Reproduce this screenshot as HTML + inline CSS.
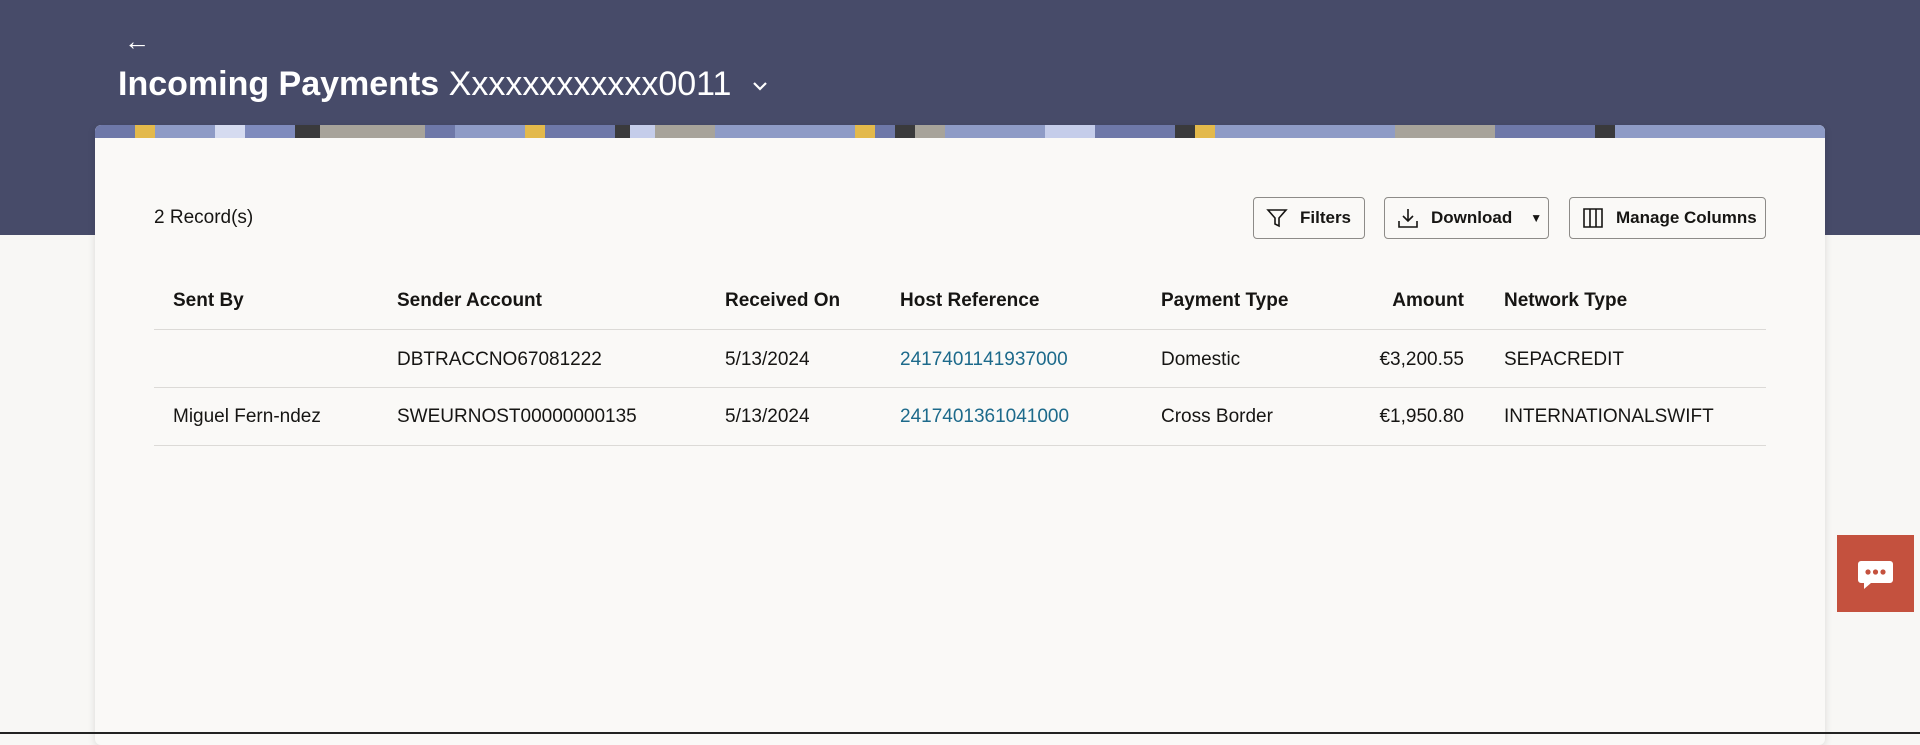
<!DOCTYPE html>
<html><head><style>
*{margin:0;padding:0;box-sizing:border-box}
body{width:1920px;height:734px;overflow:hidden;background:#f8f7f5;font-family:"Liberation Sans",sans-serif;color:#161513;position:relative}
.hdr{position:absolute;left:0;top:0;width:1920px;height:235px;background:#474b69}
.back{position:absolute;left:124px;top:26px;color:#fff;font-size:26px}
.title{position:absolute;left:118px;top:65px;color:#fff;font-size:34px;white-space:nowrap;letter-spacing:0px}
.title b{font-weight:700}
.card{position:absolute;left:95px;top:125px;width:1730px;height:620px;background:#faf9f7;border-radius:6px;overflow:hidden;box-shadow:0 2px 8px rgba(0,0,0,.12)}
.stripe{height:13px;background:linear-gradient(90deg,#6e78a8 0 40px,#e3b94b 40px 60px,#8e9bc6 60px 120px,#d5dbf0 120px 150px,#7f8bbd 150px 200px,#3a3a3c 200px 225px,#a7a39a 225px 330px,#6e78a8 330px 360px,#8e9bc6 360px 430px,#e3b94b 430px 450px,#6e78a8 450px 520px,#3a3a3c 520px 535px,#c5cdea 535px 560px,#a7a39a 560px 620px,#8e9bc6 620px 760px,#e3b94b 760px 780px,#6e78a8 780px 800px,#3a3a3c 800px 820px,#a7a39a 820px 850px,#8e9bc6 850px 950px,#c5cdea 950px 1000px,#6e78a8 1000px 1080px,#3a3a3c 1080px 1100px,#e3b94b 1100px 1120px,#8e9bc6 1120px 1300px,#a7a39a 1300px 1400px,#6e78a8 1400px 1500px,#3a3a3c 1500px 1520px,#8e9bc6 1520px 1730px)}
.rec{position:absolute;left:154px;top:207px;font-size:19px}
.btn{position:absolute;top:197px;height:42px;border:1px solid #8d8b88;border-radius:4px;font-size:17px;font-weight:700;display:flex;align-items:center;background:#faf9f7;white-space:nowrap}
.th,.td{position:absolute;font-size:19px;white-space:nowrap}
.th{font-weight:700;top:290px}
.line{position:absolute;left:154px;width:1612px;height:1px;background:#dcdad7}
.lnk{color:#1d6a8b}
.chat{position:absolute;left:1837px;top:535px;width:77px;height:77px;background:#c4513e}
</style></head><body>
<div class="hdr"></div>
<div class="back">&#8592;</div>
<div class="title"><b>Incoming Payments</b> Xxxxxxxxxxxx0011 <svg width="18" height="12" viewBox="0 0 18 12" style="margin-left:10px;vertical-align:middle"><path d="M3 3l6 6 6-6" stroke="#fff" stroke-width="2.2" fill="none"/></svg></div>
<div class="card"><div class="stripe"></div></div>
<div class="rec">2 Record(s)</div>
<div class="btn" style="left:1253px;width:112px;padding-left:12px"><svg width="22" height="22" viewBox="0 0 22 22" fill="none" stroke="#161513" stroke-width="1.6"><path d="M2 3h18l-7 8v8l-4-2v-6z"/></svg><span style="margin-left:12px">Filters</span></div>
<div class="btn" style="left:1384px;width:165px;padding-left:12px"><svg width="22" height="22" viewBox="0 0 22 22" fill="none" stroke="#161513" stroke-width="1.6"><path d="M11 2v12M6 9l5 5 5-5M2 14v6h18v-6"/></svg><span style="margin-left:12px">Download</span><span style="margin-left:18px;font-size:12px">&#9660;</span></div>
<div class="btn" style="left:1569px;width:197px;padding-left:12px"><svg width="22" height="22" viewBox="0 0 22 22" fill="none" stroke="#161513" stroke-width="1.6"><path d="M2 2h18v18H2zM8 2v18M14 2v18"/></svg><span style="margin-left:12px">Manage Columns</span></div>

<div class="th" style="left:173px">Sent By</div>
<div class="th" style="left:397px">Sender Account</div>
<div class="th" style="left:725px">Received On</div>
<div class="th" style="left:900px">Host Reference</div>
<div class="th" style="left:1161px">Payment Type</div>
<div class="th" style="right:456px">Amount</div>
<div class="th" style="left:1504px">Network Type</div>
<div class="line" style="top:329px"></div>

<div class="td" style="left:397px;top:349px">DBTRACCNO67081222</div>
<div class="td" style="left:725px;top:349px">5/13/2024</div>
<div class="td lnk" style="left:900px;top:349px">2417401141937000</div>
<div class="td" style="left:1161px;top:349px">Domestic</div>
<div class="td" style="right:456px;top:349px">€3,200.55</div>
<div class="td" style="left:1504px;top:349px">SEPACREDIT</div>
<div class="line" style="top:387px"></div>

<div class="td" style="left:173px;top:406px">Miguel Fern-ndez</div>
<div class="td" style="left:397px;top:406px">SWEURNOST00000000135</div>
<div class="td" style="left:725px;top:406px">5/13/2024</div>
<div class="td lnk" style="left:900px;top:406px">2417401361041000</div>
<div class="td" style="left:1161px;top:406px">Cross Border</div>
<div class="td" style="right:456px;top:406px">€1,950.80</div>
<div class="td" style="left:1504px;top:406px">INTERNATIONALSWIFT</div>
<div class="line" style="top:445px"></div>

<div class="chat"><svg width="77" height="77" viewBox="0 0 77 77"><path d="M24 26h29a3 3 0 0 1 3 3v16a3 3 0 0 1-3 3H34l-7 6v-6h-3a3 3 0 0 1-3-3V29a3 3 0 0 1 3-3z" fill="#fff"/><circle cx="31" cy="37" r="2.6" fill="#c4513e"/><circle cx="38.5" cy="37" r="2.6" fill="#c4513e"/><circle cx="46" cy="37" r="2.6" fill="#c4513e"/></svg></div>
<div style="position:absolute;left:0;top:732px;width:1920px;height:2px;background:#222"></div>
</body></html>
